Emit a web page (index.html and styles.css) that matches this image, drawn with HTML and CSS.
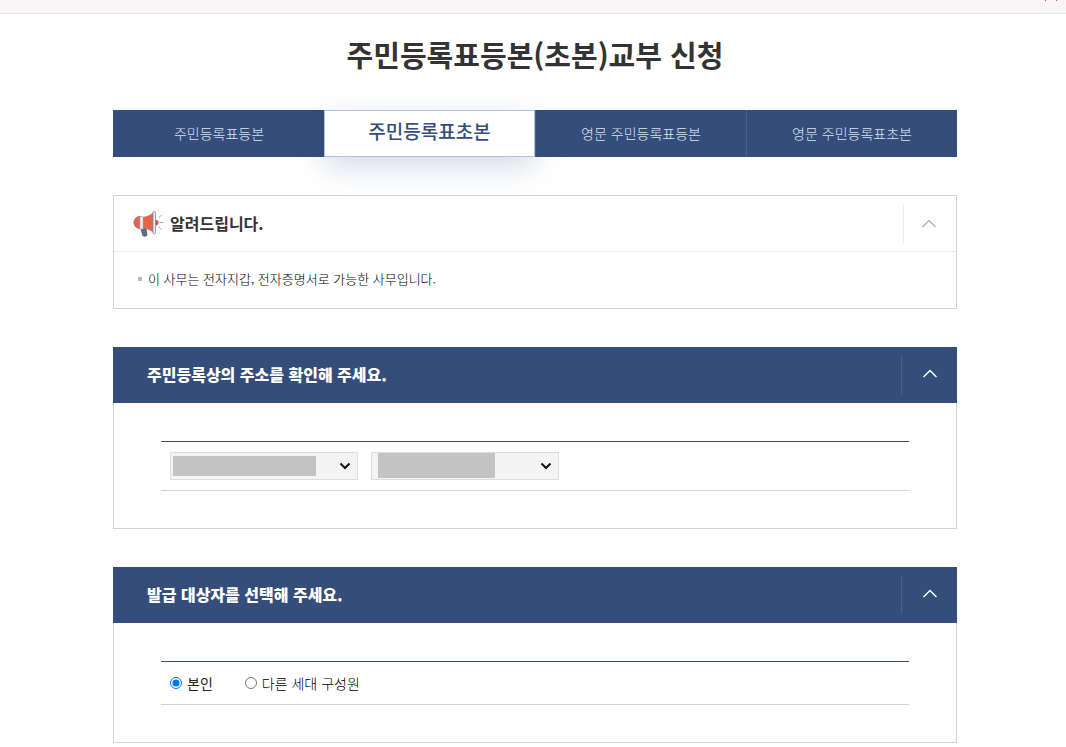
FILE: index.html
```html
<!DOCTYPE html>
<html lang="ko">
<head>
<meta charset="utf-8">
<meta name="viewport" content="width=device-width, initial-scale=1">
<title>주민등록표등본(초본)교부 신청</title>
<link rel="stylesheet" href="styles.css">
</head>
<body>
<header class="topbar">
  <svg class="topbar-mark" width="12" height="2" viewBox="0 0 12 2" aria-hidden="true"><path d="M0 0h1v1H0zM11 0h1v1h-1z" fill="#b5566a"/></svg>
</header>
<main class="page">
  <h1 class="title">주민등록표등본(초본)교부 신청</h1>

  <nav class="tabs">
    <a class="tab" href="#">주민등록표등본</a>
    <a class="tab tab-active" href="#" aria-current="page">주민등록표초본</a>
    <a class="tab" href="#">영문 주민등록표등본</a>
    <a class="tab" href="#">영문 주민등록표초본</a>
  </nav>

  <section class="notice">
    <div class="notice-head">
      <svg class="megaphone" width="32" height="28" viewBox="0 0 32 28" aria-hidden="true">
        <path d="M8 17l6.500 1 1 7.500q-2.500 2-5 .5z" fill="#5b6b80"/>
        <path d="M8.500 6.500H6.500Q2 8 2 12.500T6.500 18.500H8.500z" fill="#e2674a" stroke="#8d6f7c" stroke-width=".8"/>
        <path d="M11 7q7-1 10.500-5v21Q18 19 11 18.500z" fill="#e2674a"/>
        <path d="M8 6.500h3v12.500H8z" fill="#f1f2f8" stroke="#a3a5b8" stroke-width=".6"/>
        <path d="M23.500 9.500q3 .5 3 3t-3 3z" fill="#d2543e"/>
        <rect x="21" y="1.500" width="2.500" height="22.500" rx="1.200" fill="#eceef5" stroke="#8588a0" stroke-width=".8"/>
        <path d="M26.500 8l3-3M27.500 12.500h4M26.500 16.500l3 3" stroke="#a4a6b8" fill="none"/>
      </svg>
      <h2 class="notice-title">알려드립니다.</h2>
      <button class="toggle toggle-light" type="button" aria-label="접기">
        <svg width="14" height="9" viewBox="0 0 14 9" aria-hidden="true"><path d="M.5 8L7 1.500 13.500 8" fill="none" stroke="currentColor" stroke-width="1.200"/></svg>
      </button>
    </div>
    <ul class="notice-list">
      <li class="notice-item">이 사무는 전자지갑, 전자증명서로 가능한 사무입니다.</li>
    </ul>
  </section>

  <section class="panel">
    <div class="panel-head">
      <h2 class="panel-title">주민등록상의 주소를 확인해 주세요.</h2>
      <button class="toggle" type="button" aria-label="접기">
        <svg width="14" height="9" viewBox="0 0 14 9" aria-hidden="true"><path d="M.5 8L7 1.500 13.500 8" fill="none" stroke="currentColor" stroke-width="1.500"/></svg>
      </button>
    </div>
    <div class="panel-body">
      <div class="row row-selects">
        <div class="field">
          <select class="select" aria-label="시도"><option></option></select>
          <span class="mask mask-city"></span>
          <svg class="caret" width="12" height="8" viewBox="0 0 12 8" aria-hidden="true"><path d="M1.500 1.500L6 6l4.500-4.500" fill="none" stroke="#111" stroke-width="2"/></svg>
        </div>
        <div class="field">
          <select class="select" aria-label="시군구"><option></option></select>
          <span class="mask mask-district"></span>
          <svg class="caret" width="12" height="8" viewBox="0 0 12 8" aria-hidden="true"><path d="M1.500 1.500L6 6l4.500-4.500" fill="none" stroke="#111" stroke-width="2"/></svg>
        </div>
      </div>
    </div>
  </section>

  <section class="panel">
    <div class="panel-head">
      <h2 class="panel-title">발급 대상자를 선택해 주세요.</h2>
      <button class="toggle" type="button" aria-label="접기">
        <svg width="14" height="9" viewBox="0 0 14 9" aria-hidden="true"><path d="M.5 8L7 1.500 13.500 8" fill="none" stroke="currentColor" stroke-width="1.500"/></svg>
      </button>
    </div>
    <div class="panel-body">
      <div class="row row-radios">
        <label class="choice choice-on"><input class="radio" type="radio" name="target" checked>본인</label>
        <label class="choice"><input class="radio" type="radio" name="target">다른 세대 구성원</label>
      </div>
    </div>
  </section>
</main>
</body>
</html>
```
FILE: styles.css
```css
* { box-sizing: border-box; }

body {
  margin: 0;
  background: #fff;
  color: #333;
  font-family: "Noto Sans CJK KR", sans-serif;
  font-size: 14px;
}

h1, h2, ul { margin: 0; padding: 0; }

.topbar {
  display: flex;
  justify-content: flex-end;
  height: 14px;
  padding-right: 9px;
  background: #f7f5f6;
  border-bottom: 1px solid #e5e3e4;
}

.page { padding: 0 109px 3px 113px; }

.title {
  padding: 18px 0 34px;
  font-size: 29px;
  line-height: 44px;
  font-weight: 700;
  text-align: center;
}

.tabs {
  display: grid;
  grid-template-columns: repeat(4, 1fr);
  height: 47px;
  background: #344d7a;
}

.tab {
  display: flex;
  align-items: center;
  justify-content: center;
  padding-bottom: 2px;
  border-left: 1px solid #49618c;
  color: #dde2eb;
  font-weight: 300;
  text-decoration: none;
}

.tab:first-child { border-left-color: #344d7a; }

.tab-active {
  position: relative;
  padding-bottom: 6px;
  border: 1px solid #b3bfdc;
  background: #fff;
  box-shadow: 0 10px 30px rgba(52, 77, 122, .2);
  color: #344d7a;
  font-size: 19px;
  font-weight: 500;
}

.notice {
  margin-top: 38px;
  border: 1px solid #d3d3d3;
}

.notice-head {
  display: flex;
  align-items: center;
  height: 56px;
  padding-left: 18px;
  border-bottom: 1px solid #ebebeb;
}

.notice-title {
  flex: 1;
  margin-left: 6px;
  padding-bottom: 2px;
  font-size: 16px;
  font-weight: 700;
}

.notice-list { padding: 17px 24px 19px; list-style: none; }

.notice-item {
  display: flex;
  align-items: center;
  gap: 6px;
  color: #000;
  font-size: 13px;
  line-height: 20px;
  font-weight: 300;
}

.notice-item::before {
  content: "";
  width: 4px;
  height: 4px;
  background: #bbb;
}

.toggle {
  width: 56px;
  height: 38px;
  padding: 0 0 3px;
  border: 0;
  border-left: 1px solid #49618c;
  background: none;
  color: #fff;
}

.toggle svg { display: block; margin: 0 auto; }

.toggle-light {
  width: 53px;
  padding: 0 3px 1px 0;
  border-left-color: #ebebeb;
  color: #aaa;
}

.panel {
  margin-top: 38px;
  border: 1px solid #d3d3d3;
  border-top: 0;
}

.panel-head {
  display: flex;
  align-items: center;
  height: 56px;
  margin: 0 -1px;
  padding-left: 34px;
  background: #344d7a;
  color: #fff;
}

.panel-title {
  flex: 1;
  padding-bottom: 2px;
  font-size: 16px;
  font-weight: 900;
}

.panel-body { padding: 38px 47px 37px; }

.row {
  display: flex;
  align-items: center;
  padding: 10px 9px;
  border-top: 1px solid #344d7a;
  border-bottom: 1px solid #d3d3d3;
}

.row-selects { gap: 13px; }

.field { position: relative; width: 188px; }

.select {
  display: block;
  width: 100%;
  height: 28px;
  border: 1px solid #ddd;
  border-radius: 0;
  background: #f4f4f4;
  appearance: none;
}

.mask {
  position: absolute;
  background: #c3c3c3;
  pointer-events: none;
}

.mask-city { top: 4px; left: 3px; width: 143px; height: 20px; }
.mask-district { top: 1px; left: 7px; width: 117px; height: 25px; }

.caret {
  position: absolute;
  top: 10px;
  right: 7px;
  pointer-events: none;
}

.row-radios { gap: 32px; }

.choice {
  display: flex;
  align-items: center;
  gap: 5px;
  color: #000;
  line-height: 22px;
  font-weight: 300;
}

.choice-on { color: #222; font-weight: 400; }

.radio { width: 12px; height: 12px; margin: 0; }
```
